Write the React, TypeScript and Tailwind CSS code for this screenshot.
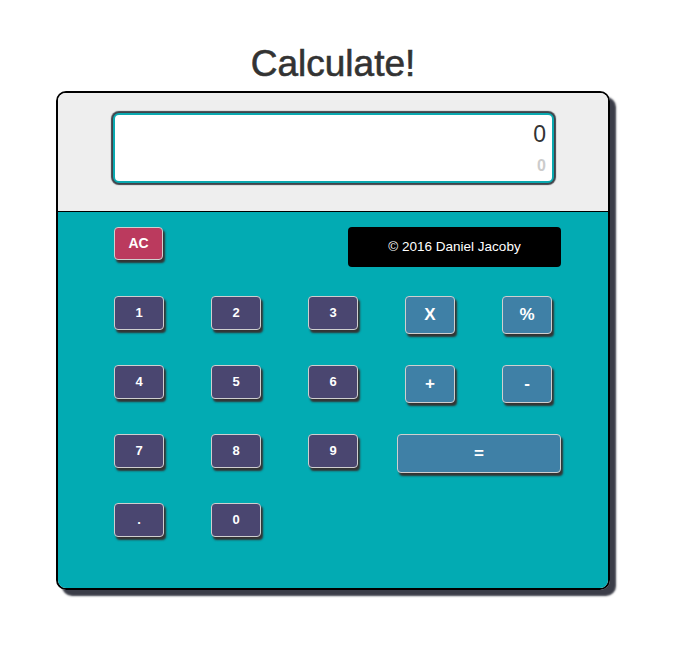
import React from "react";

const digitBtn =
  "w-[50px] h-[34px] rounded-[4px] border border-[#cfcfcf] bg-[#4a4670] text-white text-[13px] font-bold shadow-[2px_3px_2px_#333]";
const opBtn =
  "w-[50px] h-[38px] rounded-[4px] border border-[#cfcfcf] bg-[#3f80a6] text-white text-[17px] font-bold shadow-[2px_3px_2px_#333]";

function Display() {
  return (
    <div className="ml-[55px] mt-[20px] w-[441px] h-[70px] rounded-[6px] border-2 border-[#0aa9b0] bg-white shadow-[0_0_1px_2px_#3f4249] flex flex-col items-end pr-[6px]">
      <div className="text-[23px] leading-[26px] mt-[6px] text-[#333]">0</div>
      <div className="text-[16px] leading-[18px] mt-[10px] font-bold text-[#cccccc]">0</div>
    </div>
  );
}

export default function App() {
  const rows = [
    ["1", "2", "3"],
    ["4", "5", "6"],
    ["7", "8", "9"],
  ];

  return (
    <div className="min-h-screen bg-white font-['Liberation_Sans',Arial,sans-serif]">
      <div className="w-[666px] pt-[44px] flex flex-col items-center">
        <h1 className="text-[37px] leading-[40px] text-[#333] [-webkit-text-stroke:0.6px_#333]">
          Calculate!
        </h1>

        <div className="mt-[7px] w-[554px] h-[499px] border-2 border-black rounded-[10px] overflow-hidden shadow-[6px_6px_2px_#3b3d48] flex flex-col">
          {/* screen */}
          <div className="h-[119px] shrink-0 bg-[#eeeeee] border-b border-black">
            <Display />
          </div>

          {/* keypad */}
          <div className="flex-1 bg-[#02abb3] pl-[56px] pt-[15px] grid grid-cols-[97px_97px_97px_97px_97px] auto-rows-[69px] items-start">
            <button className="w-[49px] h-[33px] rounded-[4px] border border-[#cfcfcf] bg-[#bb3a5e] text-white text-[14px] font-bold shadow-[2px_3px_2px_#333]">
              AC
            </button>
            <div className="col-start-3 col-span-3 ml-[40px] w-[213px] h-[40px] rounded-[4px] bg-black text-white text-[13.5px] flex items-center justify-center">
              © 2016 Daniel Jacoby
            </div>

            {rows.map((r, i) => (
              <React.Fragment key={i}>
                {r.map((d) => (
                  <button key={d} className={digitBtn}>
                    {d}
                  </button>
                ))}
                {i === 0 && (
                  <>
                    <button className={opBtn}>X</button>
                    <button className={opBtn}>%</button>
                  </>
                )}
                {i === 1 && (
                  <>
                    <button className={opBtn}>+</button>
                    <button className={opBtn}>-</button>
                  </>
                )}
                {i === 2 && (
                  <button className="col-span-2 -ml-[8px] w-[164px] h-[39px] rounded-[4px] border border-[#cfcfcf] bg-[#3f80a6] text-white text-[17px] font-bold shadow-[2px_3px_2px_#333]">
                    =
                  </button>
                )}
              </React.Fragment>
            ))}

            <button className={digitBtn}>.</button>
            <button className={digitBtn}>0</button>
          </div>
        </div>
      </div>
    </div>
  );
}
